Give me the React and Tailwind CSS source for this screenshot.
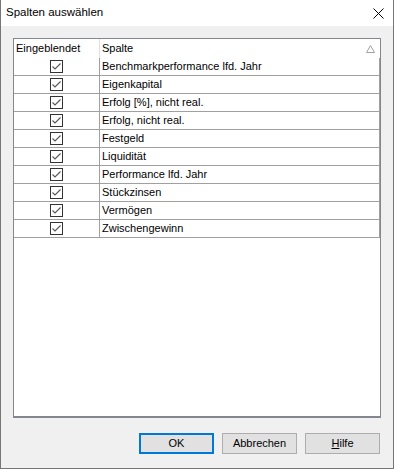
const ROWS = [
  'Benchmarkperformance lfd. Jahr',
  'Eigenkapital',
  'Erfolg [%], nicht real.',
  'Erfolg, nicht real.',
  'Festgeld',
  'Liquidität',
  'Performance lfd. Jahr',
  'Stückzinsen',
  'Vermögen',
  'Zwischengewinn',
];

function Check() {
  return (
    <div className="w-[13px] h-[13px] border border-[#333333] bg-white flex items-center justify-center">
      <svg width="11" height="11" viewBox="0 0 11 11">
        <polyline points="1.5,5.5 4,8 9.5,2.5" fill="none" stroke="#555555" strokeWidth="1.1" />
      </svg>
    </div>
  );
}

export default function App() {
  return (
    <div
      className="w-[394px] h-[469px] flex flex-col border-l border-r border-b border-[#767676] text-[11px] text-black overflow-hidden"
      style={{ fontFamily: '"Liberation Sans", Arial, sans-serif' }}
    >
      {/* title bar */}
      <div className="h-[26px] bg-white flex items-center justify-between pl-[5px] pr-[9px] shrink-0">
        <span className="text-[11.5px]">Spalten auswählen</span>
        <svg width="11" height="11" viewBox="0 0 11 11">
          <path d="M0.5 0.5 L10.5 10.5 M10.5 0.5 L0.5 10.5" stroke="#000" strokeWidth="1" />
        </svg>
      </div>

      {/* body */}
      <div className="flex-1 bg-[#f0f0f0] pt-[12px] px-[12px] pb-[14px] flex flex-col">
        <div className="h-[380px] border border-[#828790] border-b-2 bg-white flex flex-col">
          <div className="h-[19px] flex shrink-0">
            <div className="w-[86px] border-r border-[#e0e0e0] pl-[2px] flex items-center">Eingeblendet</div>
            <div className="flex-1 pl-[2px] pr-[5px] flex items-center justify-between">
              <span>Spalte</span>
              <svg width="9" height="8" viewBox="0 0 9 8">
                <path d="M4.5 0.5 L8.5 7.5 L0.5 7.5 Z" fill="none" stroke="#a0a0a0" strokeWidth="1" />
              </svg>
            </div>
          </div>
          {ROWS.map((r) => (
            <div key={r} className="h-[18px] flex border-b border-r border-[#a0a0a0] shrink-0">
              <div className="w-[86px] border-r border-[#a0a0a0] flex items-center justify-center">
                <Check />
              </div>
              <div className="flex-1 pl-[2px] flex items-center">{r}</div>
            </div>
          ))}
        </div>

        <div className="mt-[15px] flex justify-end gap-[8px] pr-[1px]">
          <button className="w-[75px] h-[21px] border-2 border-[#0078d7] bg-[#e1e1e1] text-[11px]">OK</button>
          <button className="w-[75px] h-[21px] border border-[#adadad] bg-[#e1e1e1] text-[11px]">Abbrechen</button>
          <button className="w-[75px] h-[21px] border border-[#adadad] bg-[#e1e1e1] text-[11px]">
            <span className="underline">H</span>ilfe
          </button>
        </div>
      </div>
    </div>
  );
}
